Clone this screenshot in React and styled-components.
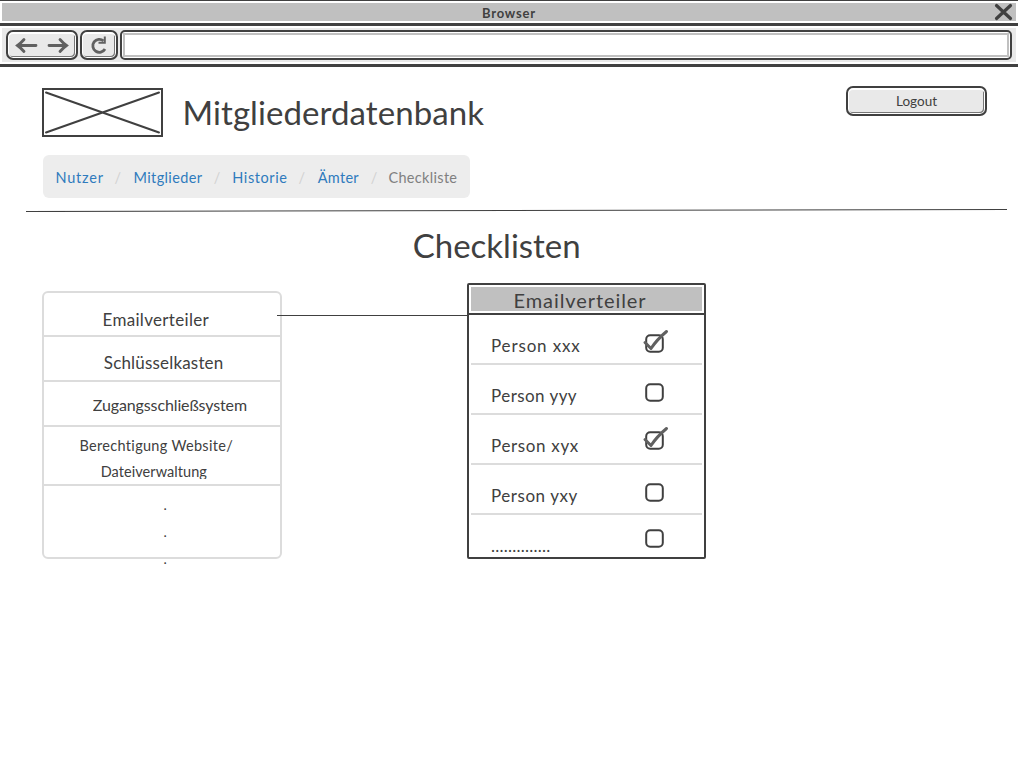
import React from "react";
import styled, { createGlobalStyle } from "styled-components";

const ink = "#404040";
const rule = "#dcdcdc";

const GlobalStyle = createGlobalStyle`
  * { box-sizing: border-box; }
  body {
    margin: 0;
    background: #fff;
    color: ${ink};
    font-family: Lato, "Liberation Sans", sans-serif;
    font-variant-ligatures: none;
    overflow: hidden;
  }
`;

const Page = styled.div`
  width: 1018px;
  height: 766px;
`;

/* ---- browser frame ---- */

const TitleBar = styled.header`
  height: 26px;
  padding: 2px 2px 2px;
  border-top: 1px solid ${ink};
  border-bottom: 3px solid ${ink};
`;

const TitleFill = styled.div`
  display: flex;
  align-items: center;
  height: 18px;
  padding: 0 2px 0 480px;
  background: #c0c0c0;
  font-size: 13px;
  font-weight: 700;
  line-height: 18px;
  letter-spacing: 0.8px;
`;

const WindowTitle = styled.span`
  padding-top: 2px;
`;

const CloseIcon = styled.svg`
  width: 20px;
  height: 18px;
  margin-left: auto;
`;

const ToolBar = styled.div`
  height: 41px;
  padding: 2px;
  border-bottom: 3px solid ${ink};
`;

const ToolFill = styled.div`
  display: flex;
  gap: 2px;
  height: 34px;
  padding: 2px 4px;
  background: #e9e9e9;
`;

const SketchButton = styled.button`
  display: flex;
  align-items: center;
  justify-content: center;
  width: ${(p) => p.$width}px;
  height: 30px;
  margin: 0;
  padding: 0;
  border: 2px solid ${ink};
  border-radius: 7px;
  background: #e9e9e9;
  box-shadow: inset 0 0 0 1px #fff, inset 0 2px 0 #fff, inset -1px -1px 0 1px #777;
  color: ${ink};
  font-family: inherit;
  font-size: 13.5px;
  line-height: 26px;
`;

const Address = styled.div`
  flex: 0 0 892px;
  padding: 1px;
  border: 2px solid ${ink};
  border-radius: 5px;
  background: #fff;
`;

const AddressInner = styled.div`
  height: 24px;
  border: 2px solid #c0c0c0;
`;

/* ---- page header ---- */

const Masthead = styled.div`
  display: flex;
  align-items: flex-start;
  height: 88px;
  padding: 19px 31px 0 42px;
`;

const Logo = styled.svg`
  width: 121px;
  height: 49px;
  margin-top: 2px;
`;

const SiteTitle = styled.h1`
  margin: 6px auto 0 19.5px;
  font-size: 33px;
  font-weight: 400;
  line-height: 41px;
  letter-spacing: 0.08px;
`;

const Crumbs = styled.nav`
  display: flex;
  align-items: center;
  width: 427px;
  height: 43px;
  margin-left: 43px;
  padding: 2px 0 0 12.4px;
  border-radius: 6px;
  background: #ededed;
  font-size: 14.5px;
  line-height: 20px;
`;

const Crumb = styled.a`
  width: ${(p) => p.$width}px;
  color: ${(p) => (p.$current ? "#808080" : "#2f7bbd")};
  letter-spacing: ${(p) => p.$track}px;
  white-space: nowrap;
`;

const Slash = styled.span`
  width: ${(p) => p.$width}px;
  padding-left: 10px;
  color: #d2d2d2;
`;

const Divider = styled.svg`
  display: block;
  width: 981px;
  height: 4px;
  margin: 10px 0 0 26px;
`;

const Heading = styled.h2`
  margin: 15px 0 0 412.7px;
  font-size: 33px;
  font-weight: 400;
  line-height: 37px;
  letter-spacing: 0;
`;

/* ---- lists ---- */

const Columns = styled.main`
  display: flex;
  align-items: flex-start;
  margin: 19px 0 0 42px;
`;

const Topics = styled.ul`
  width: 240px;
  height: 268px;
  margin: 8px 0 0;
  padding: 0;
  border: 2px solid ${rule};
  border-radius: 6px;
  list-style: none;
`;

const Topic = styled.li`
  height: ${(p) => p.$height}px;
  padding: ${(p) => p.$top}px 0 0 ${(p) => p.$left}px;
  border-bottom: 2px solid ${rule};
`;

const MoreTopics = styled.li`
  padding: 5px 0 0 119.5px;
  font-size: 14px;
  line-height: 27px;
`;

const Label = styled.div`
  height: ${(p) => p.$line}px;
  margin: ${(p) => p.$margin || 0};
  overflow: ${(p) => (p.$clip ? "hidden" : "visible")};
  font-size: ${(p) => p.$size}px;
  line-height: ${(p) => p.$line}px;
  letter-spacing: ${(p) => p.$track}px;
  white-space: nowrap;
`;

const Connector = styled.div`
  width: 190px;
  height: 1px;
  margin: 32px 0 0 -5px;
  background: ${ink};
`;

const Panel = styled.section`
  width: 239px;
  height: 276px;
  border: 2px solid ${ink};
  border-radius: 2px;
`;

const PanelHead = styled.div`
  height: 30px;
  padding: 2px;
  border-bottom: 2px solid ${ink};
`;

const PanelTitle = styled.h3`
  height: 24px;
  margin: 0;
  padding-left: 42.5px;
  background: #c0c0c0;
  font-size: 20px;
  font-weight: 400;
  line-height: 26px;
  letter-spacing: 0.92px;
`;

const PersonRow = styled.div`
  display: flex;
  align-items: flex-start;
  height: ${(p) => p.$height}px;
  margin: 0 2px;
  padding-left: 20px;
  border-bottom: ${(p) => (p.$last ? "none" : `2px solid ${rule}`)};
`;

const Person = styled.span`
  width: 149px;
  padding-top: 21px;
  font-size: 17px;
  line-height: 20px;
  letter-spacing: ${(p) => p.$track}px;
  white-space: nowrap;
`;

const CheckMark = styled.svg`
  width: 28px;
  height: 28px;
  margin-top: ${(p) => p.$top}px;
  overflow: visible;
`;

const topics = [
  { text: "Emailverteiler", size: 17, line: 20, track: 0.32, height: 44, top: 17, left: 58.5 },
  { text: "Schlüsselkasten", size: 17, line: 20, track: 0.18, height: 45, top: 16, left: 59.8 },
  { text: "Zugangsschließsystem", size: 16, line: 18, track: -0.12, height: 45, top: 14, left: 48.8, clip: true },
];

const people = [
  { name: "Person xxx", track: 0.85, height: 50, boxTop: 14.5, checked: true },
  { name: "Person yyy", track: 0.45, height: 50, boxTop: 13.5 },
  { name: "Person xyx", track: 0.65, height: 50, boxTop: 11.5, checked: true },
  { name: "Person yxy", track: 0.55, height: 50, boxTop: 13.5 },
  { name: "..............", track: 0.24, height: 42, boxTop: 9.5, last: true },
];

function CheckBox({ checked, top }) {
  return (
    <CheckMark $top={top} viewBox="0 0 28 28" fill="none">
      <rect x="6.2" y="5.2" width="16.6" height="16.6" rx="4" stroke={ink} strokeWidth="2" />
      {checked && (
        <path d="M5 12.5 L11 18.5 Q17 9.5 26.5 1.5" stroke="#606060" strokeWidth="3" strokeLinecap="round" strokeLinejoin="round" />
      )}
    </CheckMark>
  );
}

export default function App() {
  return (
    <Page>
      <GlobalStyle />
      <TitleBar>
        <TitleFill>
          <WindowTitle>Browser</WindowTitle>
          <CloseIcon viewBox="0 0 20 18" fill="none" stroke={ink} strokeWidth="3.2" strokeLinecap="round">
            <path d="M2.5 2.5 L16.5 15.5 M16.5 2.5 L2.5 15.5" />
          </CloseIcon>
        </TitleFill>
      </TitleBar>
      <ToolBar>
        <ToolFill>
          <SketchButton $width={72} aria-label="Navigation">
            <svg width="56" height="22" viewBox="0 0 56 22" fill="none" stroke="#606060" strokeWidth="2.8" strokeLinecap="round">
              <path d="M22 11.5 H3.5 M10 5.5 Q7 9 3.5 11.5 Q7 14 10 17.5" />
              <path d="M35 11.5 H52.5 M46 5.5 Q49 9 52.5 11.5 Q49 14 46 17.5" />
            </svg>
          </SketchButton>
          <SketchButton $width={38} aria-label="Reload">
            <svg width="22" height="22" viewBox="0 0 22 22" fill="none" stroke="#606060" strokeWidth="2.8">
              <path d="M17 15 A6.5 6.5 0 1 1 15.5 6.8" />
              <path d="M16.8 2.5 V8.7 H10.5" strokeWidth="2" />
            </svg>
          </SketchButton>
          <Address>
            <AddressInner />
          </Address>
        </ToolFill>
      </ToolBar>

      <Masthead>
        <Logo viewBox="0 0 121 49" fill="none" stroke={ink} strokeWidth="2">
          <rect x="1" y="1" width="119" height="47" />
          <path d="M4 4.5 L117 44.5 M4 44.5 L117 4.5" strokeLinecap="round" />
        </Logo>
        <SiteTitle>Mitgliederdatenbank</SiteTitle>
        <SketchButton $width={141}>Logout</SketchButton>
      </Masthead>

      <Crumbs>
        <Crumb $width={49.2} $track={0.8}>Nutzer</Crumb>
        <Slash $width={28.9}>/</Slash>
        <Crumb $width={70.2} $track={0.38}>Mitglieder</Crumb>
        <Slash $width={28.6}>/</Slash>
        <Crumb $width={56.3} $track={0.6}>Historie</Crumb>
        <Slash $width={29.2}>/</Slash>
        <Crumb $width={43} $track={0.3}>Ämter</Crumb>
        <Slash $width={27.7}>/</Slash>
        <Crumb $width={72} $track={0.32} $current>Checkliste</Crumb>
      </Crumbs>

      <Divider viewBox="0 0 981 4">
        <path d="M0 3.5 L981 1.5" stroke={ink} strokeWidth="1.1" />
      </Divider>

      <Heading>Checklisten</Heading>

      <Columns>
        <Topics>
          {topics.map((t) => (
            <Topic key={t.text} $height={t.height} $top={t.top} $left={t.left}>
              <Label $size={t.size} $line={t.line} $track={t.track} $clip={t.clip}>{t.text}</Label>
            </Topic>
          ))}
          <Topic $height={59} $top={9} $left={35.5}>
            <Label $size={14.5} $line={20} $track={0.31}>Berechtigung Website/</Label>
            <Label $size={14.5} $line={15} $track={0.06} $margin="8px 0 0 21.2px" $clip>Dateiverwaltung</Label>
          </Topic>
          <MoreTopics>
            <div>.</div>
            <div>.</div>
            <div>.</div>
          </MoreTopics>
        </Topics>

        <Connector />

        <Panel>
          <PanelHead>
            <PanelTitle>Emailverteiler</PanelTitle>
          </PanelHead>
          {people.map((p) => (
            <PersonRow key={p.name} $height={p.height} $last={p.last}>
              <Person $track={p.track}>{p.name}</Person>
              <CheckBox checked={p.checked} top={p.boxTop} />
            </PersonRow>
          ))}
        </Panel>
      </Columns>
    </Page>
  );
}
